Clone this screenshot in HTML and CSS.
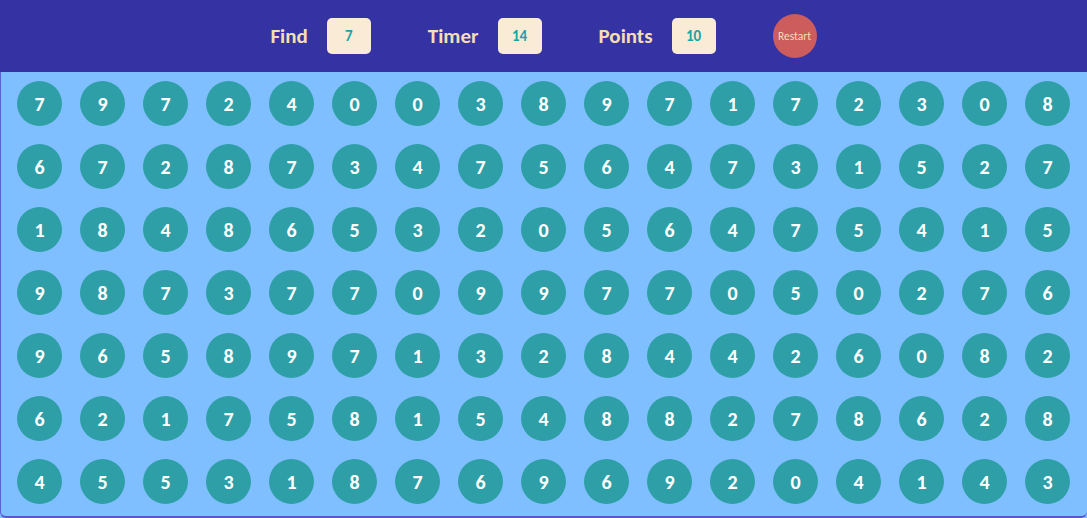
FILE: index.html
```html
<!DOCTYPE html>
<html>
<head>
<meta charset="utf-8">
<link rel="stylesheet" href="styles.css">
</head>
<body>
<div class="app">
  <header class="bar">
    <span class="label">Find</span><span class="box">7</span>
    <span class="label timer">Timer</span><span class="box">14</span>
    <span class="label points">Points</span><span class="box">10</span>
    <button class="restart">Restart</button>
  </header>
  <main class="board">
    <div class="c">7</div><div class="c">9</div><div class="c">7</div><div class="c">2</div><div class="c">4</div><div class="c">0</div><div class="c">0</div><div class="c">3</div><div class="c">8</div><div class="c">9</div><div class="c">7</div><div class="c">1</div><div class="c">7</div><div class="c">2</div><div class="c">3</div><div class="c">0</div><div class="c">8</div>
    <div class="c">6</div><div class="c">7</div><div class="c">2</div><div class="c">8</div><div class="c">7</div><div class="c">3</div><div class="c">4</div><div class="c">7</div><div class="c">5</div><div class="c">6</div><div class="c">4</div><div class="c">7</div><div class="c">3</div><div class="c">1</div><div class="c">5</div><div class="c">2</div><div class="c">7</div>
    <div class="c">1</div><div class="c">8</div><div class="c">4</div><div class="c">8</div><div class="c">6</div><div class="c">5</div><div class="c">3</div><div class="c">2</div><div class="c">0</div><div class="c">5</div><div class="c">6</div><div class="c">4</div><div class="c">7</div><div class="c">5</div><div class="c">4</div><div class="c">1</div><div class="c">5</div>
    <div class="c">9</div><div class="c">8</div><div class="c">7</div><div class="c">3</div><div class="c">7</div><div class="c">7</div><div class="c">0</div><div class="c">9</div><div class="c">9</div><div class="c">7</div><div class="c">7</div><div class="c">0</div><div class="c">5</div><div class="c">0</div><div class="c">2</div><div class="c">7</div><div class="c">6</div>
    <div class="c">9</div><div class="c">6</div><div class="c">5</div><div class="c">8</div><div class="c">9</div><div class="c">7</div><div class="c">1</div><div class="c">3</div><div class="c">2</div><div class="c">8</div><div class="c">4</div><div class="c">4</div><div class="c">2</div><div class="c">6</div><div class="c">0</div><div class="c">8</div><div class="c">2</div>
    <div class="c">6</div><div class="c">2</div><div class="c">1</div><div class="c">7</div><div class="c">5</div><div class="c">8</div><div class="c">1</div><div class="c">5</div><div class="c">4</div><div class="c">8</div><div class="c">8</div><div class="c">2</div><div class="c">7</div><div class="c">8</div><div class="c">6</div><div class="c">2</div><div class="c">8</div>
    <div class="c">4</div><div class="c">5</div><div class="c">5</div><div class="c">3</div><div class="c">1</div><div class="c">8</div><div class="c">7</div><div class="c">6</div><div class="c">9</div><div class="c">6</div><div class="c">9</div><div class="c">2</div><div class="c">0</div><div class="c">4</div><div class="c">1</div><div class="c">4</div><div class="c">3</div>
  </main>
</div>
</body>
</html>
```
FILE: styles.css
```css
* { box-sizing: border-box; }
html, body { margin: 0; padding: 0; }
body {
  width: 1087px;
  height: 518px;
  overflow: hidden;
  font-family: Carlito, Lato, "Liberation Sans", sans-serif;
  background: #80bfff;
}
.app { width: 1087px; height: 518px; display: flex; flex-direction: column; }
.bar {
  height: 72px;
  background: #3533a3;
  display: flex;
  align-items: center;
  justify-content: center;
}
.label {
  color: #f5deb3;
  font-weight: 700;
  font-size: 21px;
  margin-right: 19px;
}
.timer, .points { margin-left: 57px; }
.box {
  width: 44px;
  height: 36px;
  background: #faebd7;
  border-radius: 5px;
  color: #1aa3a3;
  font-weight: 700;
  font-size: 15px;
  display: flex;
  align-items: center;
  justify-content: center;
}
.restart {
  margin-left: 57px;
  width: 44px;
  height: 44px;
  border-radius: 50%;
  border: none;
  background: #cd5c5c;
  color: #f5deb3;
  font-family: inherit;
  font-size: 11.5px;
  padding: 0;
}
.board {
  flex: 1;
  background: #80bfff;
  border-left: 1px solid #5b62d8;
  border-bottom: 2px solid #5b55d0;
  border-radius: 0 0 6px 6px;
  padding: 0 7px;
  display: grid;
  grid-template-columns: repeat(17, 63px);
  grid-template-rows: repeat(7, 63px);
  align-content: start;
}
.c {
  width: 45px;
  height: 45px;
  margin: 9px;
  border-radius: 50%;
  background: #2e9fa7;
  color: #ffffff;
  font-weight: 700;
  font-size: 20px;
  display: flex;
  align-items: center;
  justify-content: center;
}
```
